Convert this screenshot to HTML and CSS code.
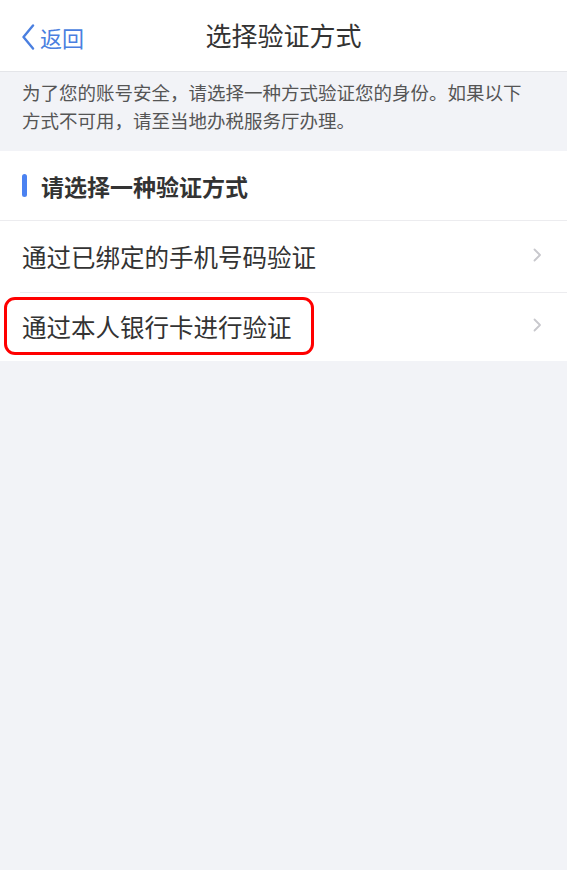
FILE: index.html
```html
<!DOCTYPE html>
<html lang="zh-CN">
<head>
<meta charset="utf-8">
<title>选择验证方式</title>
<link rel="stylesheet" href="styles.css">
</head>
<body>
<header class="nav">
  <a class="back" href="#">
    <svg class="back-icon" width="14" height="26" viewBox="0 0 14 26"><path d="M12 1.5 L2.5 13 L12 24.5" fill="none" stroke="#4a7fe0" stroke-width="2.4" stroke-linecap="round" stroke-linejoin="round"/></svg>
    <span>返回</span>
  </a>
  <h1 class="title">选择验证方式</h1>
  <span class="spacer"></span>
</header>
<p class="info">为了您的账号安全，请选择一种方式验证您的身份。如果以下方式不可用，请至当地办税服务厅办理。</p>
<section class="list">
  <div class="list-head"><span class="bar"></span><span>请选择一种验证方式</span></div>
  <a class="row" href="#">
    <span class="row-text">通过已绑定的手机号码验证</span>
    <svg class="chev" width="9" height="14" viewBox="0 0 9 14"><path d="M1.5 1.5 L7 7 L1.5 12.5" fill="none" stroke="#c8c8cd" stroke-width="1.8" stroke-linecap="round" stroke-linejoin="round"/></svg>
  </a>
  <a class="row row-last" href="#">
    <span class="row-text">通过本人银行卡进行验证</span>
    <svg class="chev" width="9" height="14" viewBox="0 0 9 14"><path d="M1.5 1.5 L7 7 L1.5 12.5" fill="none" stroke="#c8c8cd" stroke-width="1.8" stroke-linecap="round" stroke-linejoin="round"/></svg>
    <span class="highlight"></span>
  </a>
</section>
</body>
</html>
```
FILE: styles.css
```css
* { box-sizing: border-box; }
html, body { margin: 0; padding: 0; }
body {
  background: #f2f3f7;
  font-family: "Noto Sans CJK SC", "Noto Sans", sans-serif;
  color: #333;
  min-height: 870px;
}
a { text-decoration: none; color: inherit; }

.nav {
  height: 72px;
  background: #fff;
  border-bottom: 1px solid #e4e5e9;
  display: grid;
  grid-template-columns: 1fr auto 1fr;
  align-items: center;
}
.back {
  display: flex;
  align-items: center;
  gap: 5px;
  padding-left: 21px;
  color: #4a7fe0;
  font-size: 22px;
  line-height: 30px;
  padding-top: 2px;
}
.back-icon { display: block; }
.title {
  margin: 0;
  font-size: 26px;
  font-weight: 400;
  line-height: 34px;
  color: #333;
  padding-bottom: 1px;
}

.info {
  margin: 0;
  padding: 6px 40px 17px 22px;
  font-size: 18.5px;
  line-height: 28px;
  color: #555;
}

.list { background: #fff; }
.list-head {
  height: 70px;
  display: flex;
  align-items: center;
  gap: 14px;
  padding-left: 22px;
  font-size: 23px;
  font-weight: 600;
  color: #333;
  border-bottom: 1px solid #ececef;
}
.bar {
  width: 5px;
  height: 23px;
  border-radius: 2.5px;
  background: #4b82f1;
}
.row {
  position: relative;
  display: flex;
  align-items: center;
  justify-content: space-between;
  height: 72px;
  margin-left: 20px;
  padding-left: 2px;
  padding-right: 25px;
  border-bottom: 1px solid #ececef;
  font-size: 24.5px;
  color: #333;
}
.row-last {
  height: 68px;
  border-bottom: none;
}
.row-text { line-height: 32px; }
.chev { display: block; margin-top: -4px; }
.highlight {
  position: absolute;
  left: -16px;
  top: 4px;
  width: 310px;
  height: 58px;
  border: 3px solid #ff0000;
  border-radius: 11px;
}
```
